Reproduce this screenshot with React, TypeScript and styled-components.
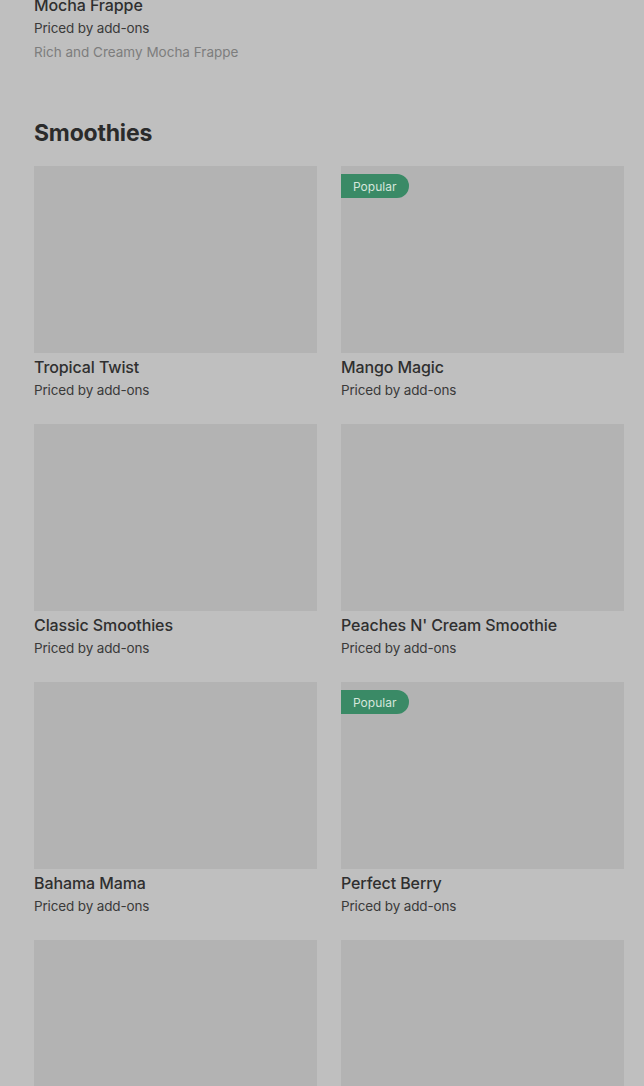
import React from "react";
import styled, { createGlobalStyle } from "styled-components";

const Global = createGlobalStyle`
  html, body { margin: 0; padding: 0; background: #bfbfbf; overflow: hidden; }
  body { font-family: Inter, "Noto Sans", "Liberation Sans", sans-serif; -webkit-font-smoothing: antialiased; }
`;

const Page = styled.div`
  padding: 0 20px 0 34px;
  height: 1086px;
  overflow: hidden;
  background: #bfbfbf;
`;

const Scrolled = styled.div`
  margin-top: -6px;
`;

const PrevItem = styled.div`
  display: flex;
  flex-direction: column;
`;

const Section = styled.section`
  margin-top: 55px;
`;

const Heading = styled.h2`
  margin: 0 0 17px;
  font-size: 23px;
  line-height: 32px;
  font-weight: 700;
  letter-spacing: -0.2px;
  color: #2b2b2b;
`;

const Grid = styled.div`
  display: grid;
  grid-template-columns: 283px 283px;
  column-gap: 24px;
  row-gap: 24px;
`;

const Card = styled.div`
  display: flex;
  flex-direction: column;
`;

const Thumb = styled.div`
  position: relative;
  height: 187px;
  background: #b3b3b3;
`;

const Badge = styled.span`
  position: absolute;
  left: 0;
  top: 8px;
  height: 24px;
  padding: 0 13px 0 12px;
  display: flex;
  align-items: center;
  background: #3a8a66;
  color: #d6e6dc;
  font-size: 12px;
  border-radius: 0 12px 12px 0;
`;

const Title = styled.div<{ $first?: boolean }>`
  margin-top: ${(p) => (p.$first ? "0" : "3px")};
  font-size: 16px;
  line-height: 22px;
  font-weight: 500;
  letter-spacing: -0.1px;
  color: #2f2f2f;
`;

const Price = styled.div`
  margin-top: 2px;
  font-size: 13.5px;
  line-height: 20px;
  letter-spacing: -0.15px;
  color: #3a3a3a;
`;

const Desc = styled.div`
  margin-top: 4px;
  font-size: 13.5px;
  line-height: 20px;
  color: #7d7d7d;
`;

const items = [
  { name: "Tropical Twist" },
  { name: "Mango Magic", popular: true },
  { name: "Classic Smoothies" },
  { name: "Peaches N' Cream Smoothie" },
  { name: "Bahama Mama" },
  { name: "Perfect Berry", popular: true },
  { name: "" },
  { name: "" },
];

export default function App() {
  return (
    <>
      <Global />
      <Page>
        <Scrolled>
          <PrevItem>
            <Title $first>Mocha Frappe</Title>
            <Price>Priced by add-ons</Price>
            <Desc>Rich and Creamy Mocha Frappe</Desc>
          </PrevItem>
          <Section>
            <Heading>Smoothies</Heading>
            <Grid>
              {items.map((it, i) => (
                <Card key={i}>
                  <Thumb>{it.popular && <Badge>Popular</Badge>}</Thumb>
                  {it.name && (
                    <>
                      <Title>{it.name}</Title>
                      <Price>Priced by add-ons</Price>
                    </>
                  )}
                </Card>
              ))}
            </Grid>
          </Section>
        </Scrolled>
      </Page>
    </>
  );
}
